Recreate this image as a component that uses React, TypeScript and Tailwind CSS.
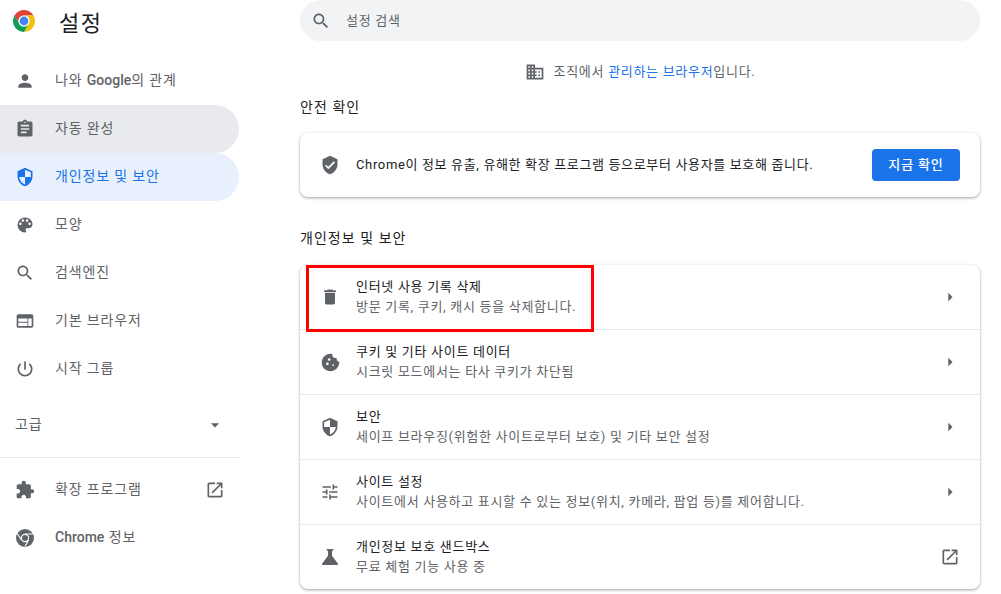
import React from 'react';

const font = "font-['Roboto','Noto_Sans_CJK_KR',sans-serif]";

const icons = {
  person: 'M12 12c2.21 0 4-1.79 4-4s-1.79-4-4-4-4 1.79-4 4 1.79 4 4 4zm0 2c-2.67 0-8 1.34-8 4v2h16v-2c0-2.66-5.33-4-8-4z',
  assignment: 'M19 3h-4.18C14.4 1.84 13.3 1 12 1c-1.3 0-2.4.84-2.82 2H5c-1.1 0-2 .9-2 2v14c0 1.1.9 2 2 2h14c1.1 0 2-.9 2-2V5c0-1.1-.9-2-2-2zm-7 0c.55 0 1 .45 1 1s-.45 1-1 1-1-.45-1-1 .45-1 1-1zm2 14H7v-2h7v2zm3-4H7v-2h10v2zm0-4H7V7h10v2z',
  security: 'M12 1L3 5v6c0 5.55 3.84 10.74 9 12 5.16-1.26 9-6.45 9-12V5l-9-4zm0 10.99h7c-.53 4.12-3.28 7.79-7 8.94V12H5V6.3l7-3.11v8.8z',
  securityFlip: 'M12 1L3 5v6c0 5.55 3.84 10.74 9 12 5.16-1.26 9-6.45 9-12V5l-9-4zm0 10.99H5c.53 4.12 3.28 7.79 7 8.94V12h7V6.3l-7-3.11v8.8z',
  palette: 'M12 3a9 9 0 0 0 0 18c.83 0 1.5-.67 1.5-1.5 0-.39-.15-.74-.39-1.01-.23-.26-.38-.61-.38-.99 0-.83.67-1.5 1.5-1.5H16c2.76 0 5-2.24 5-5 0-4.42-4.03-8-9-8zm-5.5 9c-.83 0-1.5-.67-1.5-1.5S5.67 9 6.5 9 8 9.67 8 10.5 7.33 12 6.5 12zm3-4C8.67 8 8 7.33 8 6.5S8.67 5 9.5 5s1.5.67 1.5 1.5S10.33 8 9.5 8zm5 0c-.83 0-1.5-.67-1.5-1.5S13.67 5 14.5 5s1.5.67 1.5 1.5S15.33 8 14.5 8zm3 4c-.83 0-1.5-.67-1.5-1.5S16.67 9 17.5 9s1.5.67 1.5 1.5-.67 1.5-1.5 1.5z',
  search: 'M15.5 14h-.79l-.28-.27C15.41 12.59 16 11.11 16 9.5 16 5.91 13.09 3 9.5 3S3 5.91 3 9.5 5.91 16 9.5 16c1.61 0 3.09-.59 4.23-1.57l.27.28v.79l5 4.99L20.49 19l-4.99-5zm-6 0C7.01 14 5 11.99 5 9.5S7.01 5 9.5 5 14 7.01 14 9.5 11.99 14 9.5 14z',
  web: 'M20 4H4c-1.1 0-1.99.9-1.99 2L2 18c0 1.1.9 2 2 2h16c1.1 0 2-.9 2-2V6c0-1.1-.9-2-2-2zm-5 14H4v-4h11v4zm0-5H4V9h11v4zm5 5h-4V9h4v9z',
  power: 'M13 3h-2v10h2V3zm4.83 2.17l-1.42 1.42C17.99 7.86 19 9.81 19 12c0 3.87-3.13 7-7 7s-7-3.13-7-7c0-2.19 1.01-4.14 2.58-5.42L6.17 5.17C4.23 6.82 3 9.26 3 12c0 4.97 4.03 9 9 9s9-4.03 9-9c0-2.74-1.23-5.18-3.17-6.83z',
  extension: 'M20.5 11H19V7c0-1.1-.9-2-2-2h-4V3.5C13 2.12 11.88 1 10.5 1S8 2.12 8 3.5V5H4c-1.1 0-1.99.9-1.99 2v3.8H3.5c1.49 0 2.7 1.21 2.7 2.7s-1.21 2.7-2.7 2.7H2V20c0 1.1.9 2 2 2h3.8v-1.5c0-1.49 1.21-2.7 2.7-2.7 1.49 0 2.7 1.21 2.7 2.7V22H17c1.1 0 2-.9 2-2v-4h1.5c1.38 0 2.5-1.12 2.5-2.5S21.88 11 20.5 11z',
  openNew: 'M19 19H5V5h7V3H5c-1.11 0-2 .9-2 2v14c0 1.1.89 2 2 2h14c1.1 0 2-.9 2-2v-7h-2v7zM14 3v2h3.59l-9.83 9.83 1.41 1.41L19 6.41V10h2V3h-7z',
  trash: 'M6 19c0 1.1.9 2 2 2h8c1.1 0 2-.9 2-2V7H6v12zM19 4h-3.5l-1-1h-5l-1 1H5v2h14V4z',
  tune: 'M3 17v2h6v-2H3zM3 5v2h10V5H3zm10 16v-2h8v-2h-8v-2h-2v6h2zM7 9v2H3v2h4v2h2V9H7zm14 4v-2H11v2h10zm-6-4h2V7h4V5h-4V3h-2v6z',
  flask: 'M19.8 18.4L14 10.67V6.5l1.35-1.69c.26-.33.03-.81-.39-.81H9.04c-.42 0-.65.48-.39.81L10 6.5v4.17L4.2 18.4c-.49.66-.02 1.6.8 1.6h14c.82 0 1.29-.94.8-1.6z',
  domain: 'M12 7V3H2v18h20V7H12zM6 19H4v-2h2v2zm0-4H4v-2h2v2zm0-4H4V9h2v2zm0-4H4V5h2v2zm4 12H8v-2h2v2zm0-4H8v-2h2v2zm0-4H8V9h2v2zm0-4H8V5h2v2zm10 12h-8v-2h2v-2h-2v-2h2v-2h-2V9h8v10zm-2-8h-2v2h2v-2zm0 4h-2v2h2v-2z',
  verified: 'M12 1L3 5v6c0 5.55 3.84 10.74 9 12 5.16-1.26 9-6.45 9-12V5l-9-4zm-2 16l-4-4 1.41-1.41L10 14.17l6.59-6.59L18 9l-8 8z',
  cookie: 'M21.95 10.99c-1.79-.03-3.7-1.95-2.68-4.22-2.97 1-5.78-1.59-5.19-4.56C7.1.74 2 6.41 2 12c0 5.52 4.48 10 10 10 5.89 0 10.54-5.08 9.95-11.01zM8.5 15c-.83 0-1.5-.67-1.5-1.5S7.67 12 8.5 12s1.5.67 1.5 1.5S9.33 15 8.5 15zm2-5C9.67 10 9 9.33 9 8.5S9.67 7 10.5 7s1.5.67 1.5 1.5-.67 1.5-1.5 1.5zm4.5 6c-.55 0-1-.45-1-1s.45-1 1-1 1 .45 1 1-.45 1-1 1z',
  arrowRight: 'M10 7l5 5-5 5z',
  arrowDown: 'M7 10l5 5 5-5z',
};

const Icon: React.FC<{ d: string; className?: string }> = ({ d, className = 'w-5 h-5' }) => (
  <svg viewBox="0 0 24 24" className={`${className} shrink-0 fill-current`}>
    <path d={d} fillRule="evenodd" />
  </svg>
);

const ChromeLogo = () => (
  <svg viewBox="4 4 40 40" className="w-[22px] h-[22px] shrink-0 mb-[5px]">
    <path fill="#db4437" d="M6.680 14A20 20 0 0 1 41.320 14H24A10 10 0 0 0 15.340 29z" />
    <path fill="#f4c20d" d="M41.320 14A20 20 0 0 1 24 44L32.660 29A10 10 0 0 0 24 14z" />
    <path fill="#0f9d58" d="M24 44A20 20 0 0 1 6.680 14L15.340 29A10 10 0 0 0 32.660 29z" />
    <circle cx="24" cy="24" r="10" fill="#fff" />
    <circle cx="24" cy="24" r="8" fill="#4285f4" />
  </svg>
);

const ChromeMono = () => (
  <svg viewBox="4 4 40 40" className="w-[18px] h-[18px] shrink-0">
    <circle cx="24" cy="24" r="20" fill="#5f6368" />
    <circle cx="24" cy="24" r="8" fill="none" stroke="#fff" strokeWidth="2.500" />
    <path d="M24 15h17.300M32 28.500 24 43M16 28.500 6.700 14" stroke="#fff" strokeWidth="2.500" fill="none" />
  </svg>
);

const navTop = [
  { icon: icons.person, label: <>나와 <span className="font-medium tracking-normal">Google</span>의 관계</>, key: 'me' },
  { icon: icons.assignment, label: '자동 완성', key: 'autofill', hover: true },
  { icon: icons.securityFlip, label: '개인정보 및 보안', key: 'privacy', active: true },
  { icon: icons.palette, label: '모양', key: 'look' },
  { icon: icons.search, label: '검색엔진', key: 'search' },
  { icon: icons.web, label: '기본 브라우저', key: 'browser' },
  { icon: icons.power, label: '시작 그룹', key: 'startup' },
];

const rows = [
  { icon: icons.trash, title: '인터넷 사용 기록 삭제', sub: '방문 기록, 쿠키, 캐시 등을 삭제합니다.', iconClass: 'w-5 h-5' },
  { icon: icons.cookie, title: '쿠키 및 기타 사이트 데이터', sub: '시크릿 모드에서는 타사 쿠키가 차단됨', iconClass: 'w-[21px] h-[21px]' },
  { icon: icons.security, title: '보안', sub: '세이프 브라우징(위험한 사이트로부터 보호) 및 기타 보안 설정', iconClass: 'w-5 h-5' },
  { icon: icons.tune, title: '사이트 설정', sub: '사이트에서 사용하고 표시할 수 있는 정보(위치, 카메라, 팝업 등)를 제어합니다.', iconClass: 'w-5 h-5' },
  { icon: icons.flask, title: '개인정보 보호 샌드박스', sub: '무료 체험 기능 사용 중', iconClass: 'w-6 h-6 -mx-0.5', external: true },
];

const Sidebar = () => (
  <aside className="w-[241px] shrink-0 text-[14px] tracking-[0.85px]">
    <div className="h-[57px] pl-[13px] pb-[11px] flex items-center">
      <ChromeLogo />
      <span className="ml-[24px] text-[22px] tracking-[1.5px] text-[#202124]">설정</span>
    </div>
    {navTop.map((item) => (
      <div
        key={item.key}
        className={`h-12 mr-[2px] pl-[15px] flex items-center gap-5 rounded-r-full ${
          item.active ? 'bg-[#e8f0fe] text-[#1a73e8]' : item.hover ? 'bg-[#e8eaed] text-[#5f6368]' : 'text-[#5f6368]'
        }`}
      >
        <Icon d={item.icon} />
        <span className="pb-[2px]">{item.label}</span>
      </div>
    ))}
    <div className="mt-2 h-12 pl-[15px] pr-4 flex items-center justify-between text-[#5f6368]">
      <span className="pb-[2px]">고급</span>
      <Icon d={icons.arrowDown} />
    </div>
    <div className="mt-2 h-px bg-[#e8eaed]" />
    <div className="mt-2 h-12 pl-[15px] pr-4 flex items-center gap-5 text-[#5f6368]">
      <Icon d={icons.extension} />
      <span className="flex-1 pb-[2px]">확장 프로그램</span>
      <Icon d={icons.openNew} />
    </div>
    <div className="h-12 pl-4 flex items-center gap-[21px] text-[#5f6368]">
      <ChromeMono />
      <span className="pb-[2px]"><span className="font-medium tracking-normal">Chrome</span> 정보</span>
    </div>
  </aside>
);

const Main = () => (
  <main className="ml-[59px] w-[680px] shrink-0 text-[13px] tracking-[0.7px]">
    <div className="h-[41px] rounded-full bg-[#f1f3f4] pl-[11px] flex items-center gap-[15px] text-[#5f6368]">
      <Icon d={icons.search} />
      <span>설정 검색</span>
    </div>
    <div className="mt-[21px] h-5 flex items-center justify-center gap-[9px] text-[#5f6368]">
      <Icon d={icons.domain} />
      <span>
        조직에서 <span className="text-[#1a73e8]">관리하는 브라우저</span>입니다.
      </span>
    </div>
    <h2 className="mt-[15px] h-5 flex items-center text-[14px] tracking-[1.05px] font-normal text-[#202124]">안전 확인</h2>
    <section className="mt-[16px] h-[64px] rounded-lg bg-white shadow-[0_1px_2px_rgba(60,64,67,0.3),0_1px_3px_1px_rgba(60,64,67,0.15)] px-5 flex items-center text-[#202124] tracking-[0.65px]">
      <Icon d={icons.verified} className="w-5 h-5 text-[#5f6368]" />
      <span className="ml-4 flex-1">Chrome이 정보 유출, 유해한 확장 프로그램 등으로부터 사용자를 보호해 줍니다.</span>
      <button className="w-[88px] h-8 rounded bg-[#1a73e8] text-white font-medium tracking-[0.85px]">지금 확인</button>
    </section>
    <h2 className="mt-[31px] h-5 flex items-center text-[14px] tracking-[1.05px] font-normal text-[#202124]">개인정보 및 보안</h2>
    <section className="relative mt-[17px] rounded-lg bg-white shadow-[0_1px_2px_rgba(60,64,67,0.3),0_1px_3px_1px_rgba(60,64,67,0.15)]">
      {rows.map((row, i) => (
        <div key={row.title} className={`px-5 flex items-center ${i > 0 ? 'h-[65px] border-t border-[#e8eaed]' : 'h-[64px]'}`}>
          <div className="w-5 flex justify-center">
            <Icon d={row.icon} className={`${row.iconClass} text-[#5f6368]`} />
          </div>
          <div className="ml-4 flex-1 leading-5">
            <div className="text-[#202124]">{row.title}</div>
            <div className="text-[#5f6368]">{row.sub}</div>
          </div>
          <Icon d={row.external ? icons.openNew : icons.arrowRight} className="w-5 h-5 text-[#5f6368]" />
        </div>
      ))}
      <div className="absolute left-[6px] top-0 w-[288px] h-[67px] border-[3px] border-[#ff0000]" />
    </section>
  </main>
);

export default function App() {
  return (
    <div className={`${font} w-[1001px] h-[594px] overflow-hidden bg-white flex`}>
      <Sidebar />
      <Main />
    </div>
  );
}
